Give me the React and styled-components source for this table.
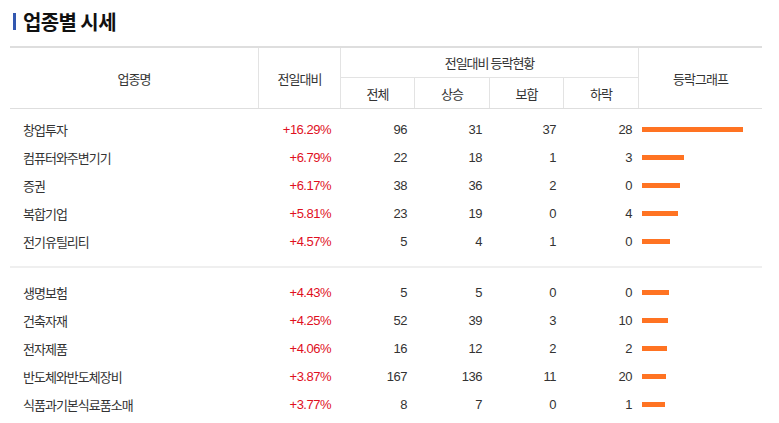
import React from 'react';
import styled, { createGlobalStyle } from 'styled-components';

const GlobalStyle = createGlobalStyle`
    body {
        margin: 0;
        background: #fff;
        font-family: "Liberation Sans", "Noto Sans CJK KR", sans-serif;
        color: #333;
    }
`;

const COLUMNS = '248px 82px 74px 75px 74px 75px 124px';

const Page = styled.div`
    width: 779px;
    height: 423px;
    padding: 10px 17px 0 10px;
    box-sizing: border-box;
    overflow: hidden;
`;

const Title = styled.h2`
    display: flex;
    align-items: center;
    gap: 7px;
    margin: 0 0 13px 3px;
    height: 23px;
    font-family: "Noto Sans CJK KR", sans-serif;
    font-size: 20px;
    font-weight: 700;
    letter-spacing: -0.6px;
    color: #111;

    &::before {
        content: '';
        display: block;
        width: 3px;
        height: 17px;
        background: #3358b0;
    }
`;

const Header = styled.div`
    display: grid;
    grid-template-columns: ${COLUMNS};
    grid-template-rows: 30px 30px;
    border-top: 2px solid #dedede;
    border-bottom: 1px solid #dedede;
`;

const HeadCell = styled.div`
    display: flex;
    align-items: center;
    justify-content: center;
    font-size: 13px;
    letter-spacing: -1px;
    color: #333;
    font-family: "Noto Sans CJK KR", sans-serif;
    grid-column: ${p => p.$col};
    grid-row: ${p => p.$row};
    border-left: ${p => (p.$line ? '1px solid #e3e3e3' : 'none')};
    border-bottom: ${p => (p.$under ? '1px solid #e3e3e3' : 'none')};
`;

const Group = styled.div`
    padding: ${p => p.$pad};
    border-top: ${p => (p.$divider ? '2px solid #efefef' : 'none')};
`;

const Row = styled.div`
    display: grid;
    grid-template-columns: ${COLUMNS};
    height: 28px;
    align-items: center;
    font-size: 13px;
    color: #333;
`;

const Name = styled.div`
    padding-left: 13px;
    font-family: "Noto Sans CJK KR", sans-serif;
    letter-spacing: -1px;
`;

const Num = styled.div`
    text-align: right;
    padding-right: ${p => p.$pr || 7}px;
    letter-spacing: -0.5px;
    color: ${p => (p.$up ? '#e0101e' : '#333')};
`;

const Graph = styled.div`
    padding-left: 4px;
    display: flex;
    align-items: center;
`;

const Bar = styled.div`
    height: 5px;
    background: #ff7322;
`;

const groups = [
    [
        ['창업투자', 16.29, 96, 31, 37, 28],
        ['컴퓨터와주변기기', 6.79, 22, 18, 1, 3],
        ['증권', 6.17, 38, 36, 2, 0],
        ['복합기업', 5.81, 23, 19, 0, 4],
        ['전기유틸리티', 4.57, 5, 4, 1, 0],
    ],
    [
        ['생명보험', 4.43, 5, 5, 0, 0],
        ['건축자재', 4.25, 52, 39, 3, 10],
        ['전자제품', 4.06, 16, 12, 2, 2],
        ['반도체와반도체장비', 3.87, 167, 136, 11, 20],
        ['식품과기본식료품소매', 3.77, 8, 7, 0, 1],
    ],
];

const App = () => (
    <Page>
        <GlobalStyle />
        <Title>업종별 시세</Title>
        <Header>
            <HeadCell $col="1" $row="1 / 3">업종명</HeadCell>
            <HeadCell $col="2" $row="1 / 3" $line>전일대비</HeadCell>
            <HeadCell $col="3 / 7" $row="1" $line $under>전일대비 등락현황</HeadCell>
            <HeadCell $col="3" $row="2" $line>전체</HeadCell>
            <HeadCell $col="4" $row="2" $line>상승</HeadCell>
            <HeadCell $col="5" $row="2" $line>보합</HeadCell>
            <HeadCell $col="6" $row="2" $line>하락</HeadCell>
            <HeadCell $col="7" $row="1 / 3" $line>등락그래프</HeadCell>
        </Header>
        {groups.map((rows, gi) => (
            <Group key={gi} $divider={gi > 0} $pad={gi === 0 ? '6px 0 11px' : '10px 0 0'}>
                {rows.map(([name, pct, total, up, flat, down]) => (
                    <Row key={name}>
                        <Name>{name}</Name>
                        <Num $up $pr={9}>+{pct.toFixed(2)}%</Num>
                        <Num>{total}</Num>
                        <Num>{up}</Num>
                        <Num>{flat}</Num>
                        <Num $pr={6}>{down}</Num>
                        <Graph>
                            <Bar style={{ width: `${Math.round(pct * 6.2)}px` }} />
                        </Graph>
                    </Row>
                ))}
            </Group>
        ))}
    </Page>
);

export default App;
